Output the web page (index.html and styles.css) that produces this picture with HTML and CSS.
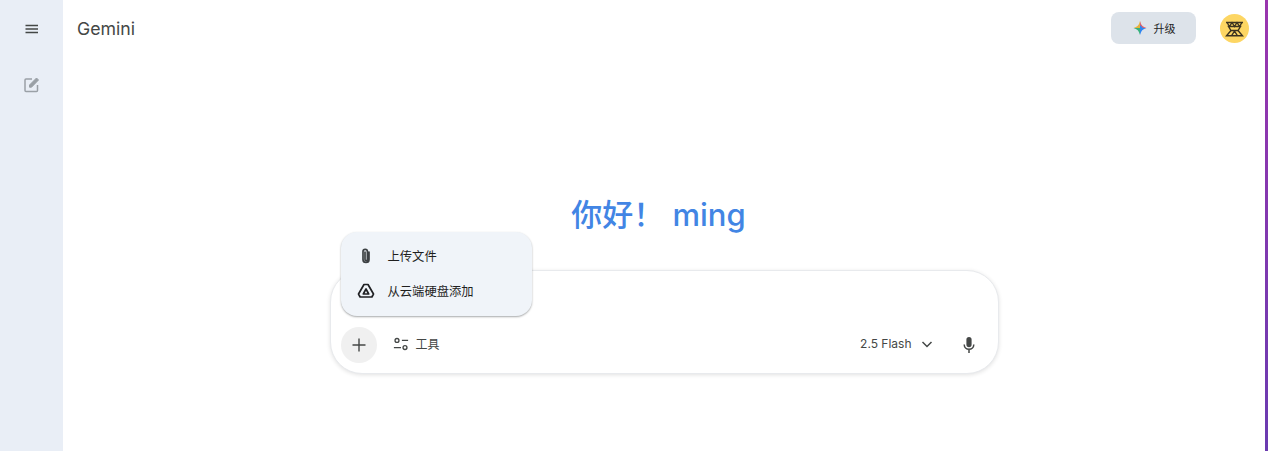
FILE: index.html
```html
<!DOCTYPE html>
<html lang="zh-CN">
<head>
    <meta charset="UTF-8">
    <title>Gemini</title>
    <link rel="stylesheet" href="styles.css">
</head>
<body class="page">
    <aside class="sideBar">
        <button class="sideButton menuButton">
            <svg width="24" height="24" viewBox="0 0 24 24"><path d="M5.500 7.800H18v1.400H5.500zM5.500 11.300H18v1.400H5.500zM5.500 14.800H18v1.400H5.500z" fill="#444746"/></svg>
        </button>
        <button class="sideButton newChatButton">
            <svg width="20" height="20" viewBox="0 0 20 20" fill="none" stroke="#9aa0a6" stroke-width="1.500"><path d="M10 4H4A1 1 0 0 0 3 5v10.500a1 1 0 0 0 1 1h10.500a1 1 0 0 0 1-1V10"/><path d="M7.500 12.200V10L14.500 3l2 2-7 7.200z" fill="#9aa0a6" stroke-width="1"/></svg>
        </button>
    </aside>
    <main class="mainArea">
        <header class="topBar">
            <span class="brand">Gemini</span>
            <div class="topRight">
                <button class="upgradeButton">
                    <svg width="16" height="16" viewBox="0 0 16 16">
                        <path d="M8 1 Q9.200 6.800 8 8 L1.500 8 Q6.800 6.800 8 1z" fill="#e8b03c"/>
                        <path d="M8 1 Q9.200 6.800 14.500 8 L8 8z" fill="#e0606a"/>
                        <path d="M1.500 8 Q6.800 9.200 8 15 L8 8z" fill="#35b07c"/>
                        <path d="M14.500 8 Q9.200 9.200 8 15 L8 8z" fill="#2f86f0"/>
                        <path d="M8 5 L11 8 L8 11z" fill="#2f86f0"/>
                    </svg>
                    <span>升级</span>
                </button>
                <div class="avatar">
                    <svg width="21" height="16" viewBox="0 0 21 16" fill="none" stroke="#3c3320" stroke-width="1.400">
                        <path d="M2 1.500h17M3 1.500l2.500 4 2.500-4 2.500 4 2.500-4 2.500 4 2.500-4"/>
                        <path d="M4.500 5.500h12L14 9.500H7z"/>
                        <path d="M7 9.500L2.500 14.800h16L14 9.500M10.500 10L7.500 14.800M10.500 10l3 4.800"/>
                    </svg>
                </div>
            </div>
        </header>
        <section class="centerArea">
            <h1 class="greeting">你好！ ming</h1>
            <div class="promptBox">
                <div class="promptTools">
                    <button class="plusButton">
                        <svg width="24" height="24" viewBox="0 0 24 24"><path d="M11.300 5.500h1.400v5.800h5.800v1.400h-5.800v5.800h-1.400v-5.800H5.500v-1.400h5.800z" fill="#444746"/></svg>
                    </button>
                    <button class="toolsButton">
                        <svg width="16" height="16" viewBox="0 0 18 18" fill="none" stroke="#444746" stroke-width="1.500"><circle cx="4.500" cy="5" r="2.200"/><circle cx="13.500" cy="13" r="2.200"/><path d="M10 5h7M1 13h8"/></svg>
                        <span class="toolsLabel">工具</span>
                    </button>
                    <div class="promptRight">
                        <button class="modelButton">
                            <span>2.5 Flash</span>
                            <svg width="16" height="16" viewBox="0 0 16 16" fill="none" stroke="#444746" stroke-width="1.500"><path d="M3.500 6l4.500 4.500L12.500 6"/></svg>
                        </button>
                        <button class="micButton">
                            <svg width="20" height="20" viewBox="0 0 20 20"><path d="M10 2a2.600 2.600 0 0 0-2.600 2.600v5a2.600 2.600 0 0 0 5.200 0v-5A2.600 2.600 0 0 0 10 2z" fill="#444746"/><path d="M5.200 9.500a4.800 4.800 0 0 0 9.600 0M10 14.300V18" fill="none" stroke="#444746" stroke-width="1.500"/></svg>
                        </button>
                    </div>
                </div>
                <ul class="uploadMenu">
                    <li class="menuItem">
                        <svg width="20" height="20" viewBox="0 0 20 20" fill="none" stroke="#3c4043" stroke-width="1.700" stroke-linecap="round"><path d="M13 6v7.500a3 3 0 0 1-6 0V5.500a2.200 2.200 0 0 1 4.400 0v8a1.200 1.200 0 0 1-2.400 0V6"/></svg>
                        <span>上传文件</span>
                    </li>
                    <li class="menuItem">
                        <svg width="20" height="20" viewBox="0 0 20 20" fill="none" stroke="#202124" stroke-width="1.700" stroke-linejoin="round"><path d="M8 3.500h4L17.500 13l-1.600 3H4.100l-1.600-3z"/><path d="M10 8L7.300 13h5.400z"/></svg>
                        <span>从云端硬盘添加</span>
                    </li>
                </ul>
            </div>
        </section>
    </main>
    <div class="edgeStripe"></div>
</body>
</html>
```

FILE: styles.css
```css
*{
    box-sizing: border-box;
}

html, body{
    height: 100%;
}

.page{
    margin: 0;
    display: flex;
    height: 451px;
    overflow: hidden;
    background: #ffffff;
    font-family: Inter, "Noto Sans CJK SC", sans-serif;
    color: #444746;
}

button{
    border: none;
    background: none;
    padding: 0;
    font-family: inherit;
    color: inherit;
    display: flex;
    align-items: center;
}

.edgeStripe{
    width: 3px;
    flex-shrink: 0;
    background: linear-gradient(#9a35ae, #6a3bb0);
}

.sideBar{
    width: 63px;
    flex-shrink: 0;
    background: #e9eef6;
    display: flex;
    flex-direction: column;
    align-items: center;
}

.sideButton{
    justify-content: center;
}

.menuButton{
    margin-top: 17px;
}

.newChatButton{
    margin-top: 34px;
}

.mainArea{
    flex: 1;
    display: flex;
    flex-direction: column;
}

.topBar{
    height: 56px;
    display: flex;
    align-items: center;
    justify-content: space-between;
    padding: 0 16px 0 14px;
}

.brand{
    font-size: 17.700px;
    color: #444746;
}

.topRight{
    display: flex;
    align-items: center;
    gap: 24px;
}

.upgradeButton{
    width: 85px;
    height: 32px;
    justify-content: center;
    gap: 6px;
    background: #dde3ea;
    border-radius: 8px;
    font-size: 11px;
    color: #1f1f1f;
}

.avatar{
    width: 29px;
    height: 29px;
    margin-top: 1px;
    border-radius: 50%;
    background: #fdd663;
    display: flex;
    align-items: center;
    justify-content: center;
}

.centerArea{
    display: flex;
    flex-direction: column;
    align-items: center;
}

.greeting{
    margin: 137px 11px 0 0;
    font-size: 31px;
    line-height: 44px;
    font-weight: 500;
    color: #4285e4;
    white-space: pre;
}

.promptBox{
    position: relative;
    width: 669px;
    height: 104px;
    margin-top: 33px;
    border: 1px solid #e8eaed;
    border-radius: 32px;
    background: #ffffff;
    box-shadow: 0 1px 4px rgba(0, 0, 0, 0.12);
    display: flex;
    align-items: flex-end;
}

.promptTools{
    flex: 1;
    display: flex;
    align-items: center;
    padding: 0 19px 10px 10px;
}

.plusButton{
    width: 36px;
    height: 36px;
    border-radius: 50%;
    background: #f0f0f0;
    justify-content: center;
}

.toolsButton{
    margin: 0 0 2px 16px;
    gap: 7px;
    font-size: 12px;
}

.toolsLabel{
    margin-bottom: 2px;
}

.promptRight{
    margin-left: auto;
    display: flex;
    align-items: center;
    gap: 24px;
}

.modelButton{
    gap: 7px;
    font-size: 12px;
    margin-bottom: 3px;
}

.micButton{
    margin-bottom: 1px;
}

.uploadMenu{
    position: absolute;
    left: 10px;
    top: -39px;
    width: 191px;
    height: 84px;
    margin: 0;
    padding: 6px 0;
    list-style: none;
    background: #f0f4f9;
    border-radius: 16px;
    box-shadow: 0 1px 2px rgba(60, 64, 67, 0.45);
}

.menuItem{
    height: 35px;
    display: flex;
    align-items: center;
    gap: 12px;
    padding-left: 15px;
    font-size: 12.300px;
    color: #1f1f1f;
}
```
